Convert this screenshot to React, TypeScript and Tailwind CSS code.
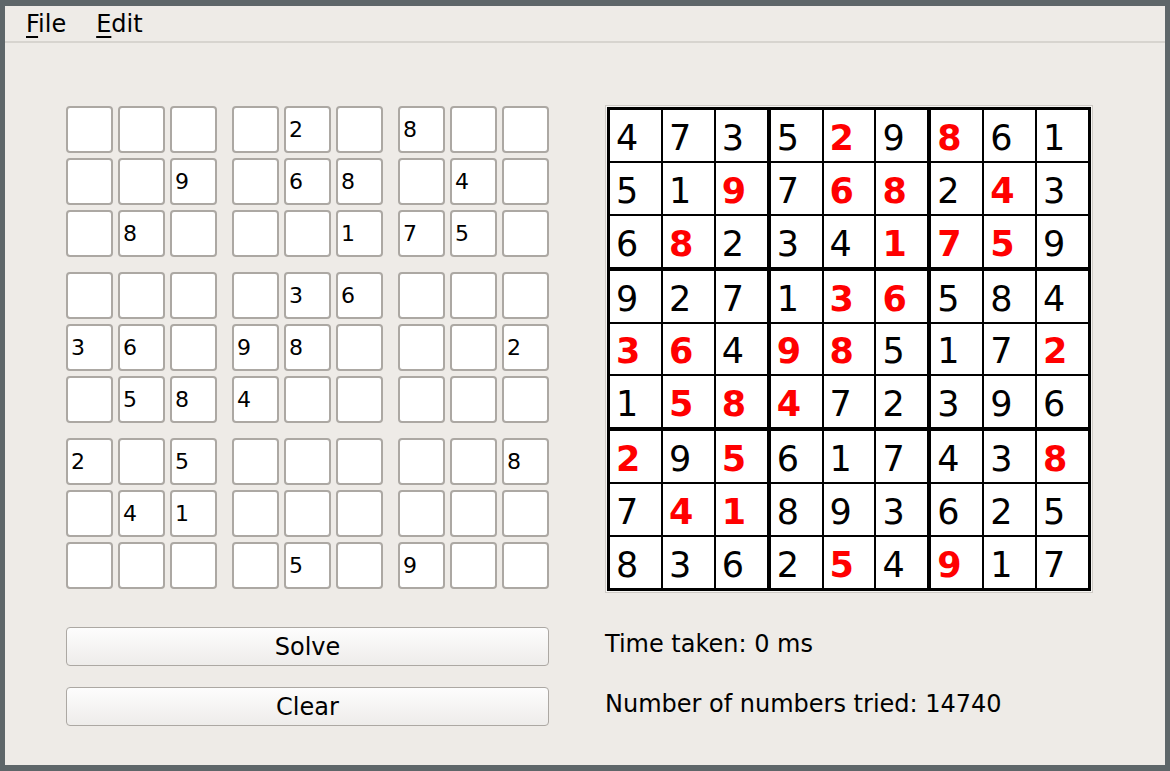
import React from 'react';

const PUZZLE = [
  '....2.8..',
  '..9.68.4.',
  '.8...175.',
  '....36...',
  '36.98...2',
  '.584.....',
  '2.5.....8',
  '.41......',
  '....5.9..',
];

const SOLUTION = [
  '473529861',
  '519768243',
  '682341759',
  '927136584',
  '364985172',
  '158472396',
  '295617438',
  '741893625',
  '836254917',
];

const font = "font-['DejaVu_Sans',sans-serif]";

// cells of block (br, bc) in row-major order
function blockCells(br: number, bc: number) {
  const out: [number, number][] = [];
  for (let r = 0; r < 3; r++) {
    for (let c = 0; c < 3; c++) out.push([br * 3 + r, bc * 3 + c]);
  }
  return out;
}

const blocks = [0, 1, 2].flatMap((br) => [0, 1, 2].map((bc) => [br, bc] as [number, number]));

function InputGrid() {
  return (
    <div className="grid grid-cols-3 gap-[15px] w-[483px]">
      {blocks.map(([br, bc]) => (
        <div key={`${br}-${bc}`} className="grid grid-cols-3 gap-[5px]">
          {blockCells(br, bc).map(([r, c]) => {
            const ch = PUZZLE[r][c];
            return (
              <div
                key={c}
                className="w-[47px] h-[47px] rounded-[4px] border-2 border-[#aca8a3] bg-white flex items-center pl-[3px] text-[22px] text-black leading-none"
              >
                {ch !== '.' ? ch : ''}
              </div>
            );
          })}
        </div>
      ))}
    </div>
  );
}

function SolvedGrid() {
  return (
    <div className="border border-[#cfcbc6] p-px bg-[#f6f5f3]">
      <div className="w-[484px] h-[484px] bg-black p-[3px] grid grid-cols-3 grid-rows-3 gap-[4px]">
        {blocks.map(([br, bc]) => (
          <div key={`${br}-${bc}`} className="grid grid-cols-3 grid-rows-3 gap-[2px]">
            {blockCells(br, bc).map(([r, c]) => {
              // givens from the puzzle are shown in red
              const given = PUZZLE[r][c] !== '.';
              return (
                <div
                  key={c}
                  className={`bg-white flex items-center pl-[6px] pt-[6px] text-[35px] leading-none ${
                    given ? 'text-[#ff0000] font-bold' : 'text-black'
                  }`}
                >
                  {SOLUTION[r][c]}
                </div>
              );
            })}
          </div>
        ))}
      </div>
    </div>
  );
}

function Button({ label }: { label: string }) {
  return (
    <button className="w-[483px] h-[39px] rounded-[4px] border border-[#aca8a3] bg-gradient-to-b from-[#fdfdfd] to-[#eeecea] text-[24px] leading-none text-black">
      {label}
    </button>
  );
}

export default function App() {
  return (
    <div className={`w-[1170px] h-[771px] bg-[#5e6669] pt-[6px] pl-[5px] pr-[5px] pb-[6px] ${font}`}>
      <div className="w-full h-full bg-[#eeebe7] flex flex-col">
        {/* Menu bar */}
        <div className="h-[37px] border-b-2 border-[#d7d4cf] flex items-center gap-[30px] pl-[21px] text-[24px] leading-none text-black">
          <span>
            <span className="underline underline-offset-[4px] decoration-[1.5px]">F</span>ile
          </span>
          <span>
            <span className="underline underline-offset-[4px] decoration-[1.5px]">E</span>dit
          </span>
        </div>

        {/* Content */}
        <div className="flex gap-[56px] pl-[61px] pt-[63px]">
          <div className="flex flex-col">
            <InputGrid />
            <div className="flex flex-col gap-[21px] mt-[38px]">
              <Button label="Solve" />
              <Button label="Clear" />
            </div>
          </div>
          <div className="flex flex-col -mt-[1px]">
            <SolvedGrid />
            <div className="text-[24px] leading-[36px] text-black mt-[33px]">Time taken: 0 ms</div>
            <div className="text-[24px] leading-[36px] text-black mt-[24px]">Number of numbers tried: 14740</div>
          </div>
        </div>
      </div>
    </div>
  );
}
